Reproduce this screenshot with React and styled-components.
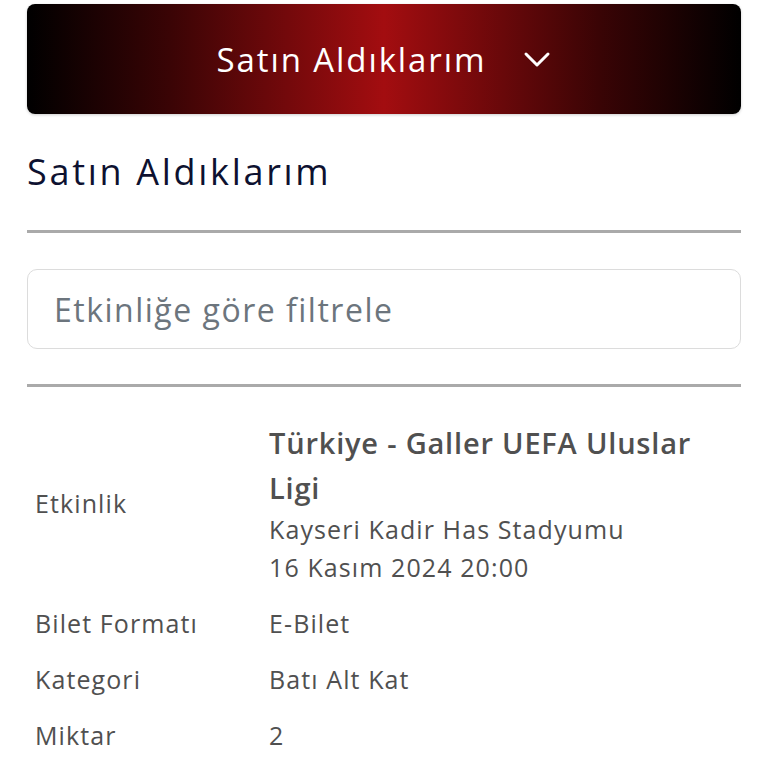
import { createGlobalStyle, styled } from 'styled-components';

const GlobalStyle = createGlobalStyle`
    body {
        margin: 0;
        background: #ffffff;
        font-family: "Open Sans", "Liberation Sans", sans-serif;
    }
`

const Page = styled.div`
    padding: 4px 27px 0 27px;
    width: 768px;
    box-sizing: border-box;
`

const DropdownBar = styled.div`
    height: 110px;
    border-radius: 8px;
    background: linear-gradient(90deg, #000000 0%, #3a0405 20%, #a30d10 50%, #3a0405 80%, #000000 100%);
    display: flex;
    align-items: center;
    justify-content: center;
    gap: 37px;
    color: #ffffff;
    font-size: 33px;
    font-weight: 500;
    letter-spacing: 1.9px;
    box-shadow: 0 1px 3px rgba(0, 0, 0, 0.2);

    svg {
        margin-top: 2px;
    }
`

const Title = styled.h2`
    margin: 36px 0 0 0;
    font-size: 36px;
    font-weight: 500;
    letter-spacing: 2.7px;
    color: #0d1130;
    line-height: 44px;
`

const Divider = styled.hr`
    border: none;
    height: 3px;
    background: #aaaaaa;
    margin: ${props => props.$top}px 0 0 0;
`

const FilterInput = styled.input`
    display: block;
    width: 100%;
    box-sizing: border-box;
    margin-top: 36px;
    height: 80px;
    border: 1.5px solid #dcdcdc;
    border-radius: 10px;
    padding: 0 26px;
    font-family: inherit;
    font-size: 32px;
    letter-spacing: 1.5px;
    color: #333;
    outline: none;

    &::placeholder {
        color: #6c757d;
    }
`

const Table = styled.table`
    width: 100%;
    border-collapse: collapse;
    margin-top: 24px;
    color: #505050;

    td {
        padding: 9px 8px;
        vertical-align: middle;
        font-size: 25px;
        letter-spacing: 1.1px;
        line-height: 38px;
    }

    td:first-child {
        width: 218px;
    }
`

const EventName = styled.div`
    font-size: 29px;
    font-weight: 600;
    letter-spacing: 0.8px;
    line-height: 45px;
`

export default function App() {
    const rows = [
        { label: "Bilet Formatı", value: "E-Bilet" },
        { label: "Kategori", value: "Batı Alt Kat" },
        { label: "Miktar", value: "2" }
    ];

    return (
        <Page>
            <GlobalStyle />
            <DropdownBar>
                <span>Satın Aldıklarım</span>
                <svg width="28" height="18" viewBox="0 0 28 18" fill="none" stroke="#fff" strokeWidth="3" strokeLinecap="round" strokeLinejoin="round">
                    <polyline points="3,3 14,14 25,3" />
                </svg>
            </DropdownBar>
            <Title>Satın Aldıklarım</Title>
            <Divider $top={36} />
            <FilterInput placeholder="Etkinliğe göre filtrele" />
            <Divider $top={35} />
            <Table>
                <tbody>
                    <tr>
                        <td>Etkinlik</td>
                        <td>
                            <EventName>Türkiye - Galler UEFA Uluslar Ligi</EventName>
                            <div>Kayseri Kadir Has Stadyumu</div>
                            <div>16 Kasım 2024 20:00</div>
                        </td>
                    </tr>
                    {rows.map((row, index) => (
                        <tr key={index}>
                            <td>{row.label}</td>
                            <td>{row.value}</td>
                        </tr>
                    ))}
                </tbody>
            </Table>
        </Page>
    )
}
